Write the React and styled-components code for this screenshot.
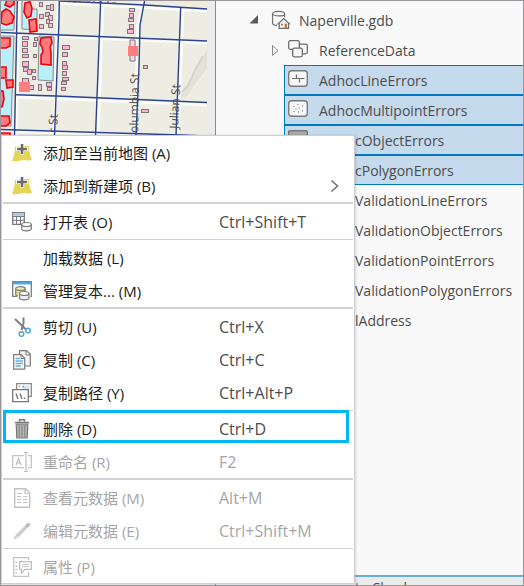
import React, { useState } from 'react';
import styled, { createGlobalStyle, css } from 'styled-components';

const GlobalStyle = createGlobalStyle`
  * {
    box-sizing: border-box;
  }
  body {
    margin: 0;
    font-family: 'Open Sans', 'Noto Sans CJK SC', sans-serif;
    font-size: 14px;
    color: #4c4c4c;
  }
  button {
    font: inherit;
    color: inherit;
    background: none;
    border: none;
    padding: 0;
  }
`;

const Window = styled.div`
  position: relative;
  display: flex;
  height: 100vh;
  border: 1px solid #98969c;
  background: #f9f9f9;
  overflow: hidden;
`;

const MapPane = styled.section`
  flex: 0 0 206px;
  background: #edede4;
  svg {
    display: block;
  }
`;

const Splitter = styled.div`
  flex: 0 0 8px;
  background: #ebebeb;
`;

const CatalogPane = styled.section`
  flex: 1;
  min-width: 0;
  display: flex;
  flex-direction: column;
  border-left: 1px solid #4a9fd0;
`;

const Tree = styled.ul`
  flex: 1;
  margin: 0;
  padding: 4px 0 0;
  list-style: none;
`;

const levels = {
  1: 32,
  2: 54,
  3: 68,
};

const TreeRow = styled.li`
  display: flex;
  align-items: center;
  height: 30px;
  margin-left: ${({ $level }) => levels[$level]}px;
  padding-left: ${({ $level }) => ($level === 3 ? 3 : 0)}px;
  border: 1px solid transparent;
  border-right: none;
  white-space: nowrap;
  ${({ $selected }) =>
    $selected &&
    css`
      background: #c5daed;
      border-color: #0079c1;
    `}
`;

const Expander = styled.button`
  display: flex;
  width: ${({ $wide }) => ($wide ? 22 : 17)}px;
`;

const NodeIcon = styled.span`
  display: flex;
  width: 20px;
  height: 22px;
  margin-right: ${({ $gap }) => $gap}px;
`;

// rows whose beginning lies under the context menu
const CoveredLabel = styled.span`
  margin-left: 36px;
`;

const DockedHeader = styled.footer`
  flex: 0 0 10px;
  border-top: 2px solid #6aaed6;
  background: #ebebeb;
  padding-left: 139px;
  line-height: 22px;
  overflow: hidden;
  white-space: nowrap;
`;

const Menu = styled.div`
  position: absolute;
  left: 0;
  top: 134px;
  width: 354px;
  border: 1px solid #cfced3;
  background: #fff;
  box-shadow: 1px 0 2px rgba(0, 0, 0, 0.15);
`;

const MenuItem = styled.button`
  position: relative;
  display: grid;
  grid-template-columns: 41px 176px 1fr 24px;
  align-items: center;
  width: 100%;
  height: 33px;
  text-align: left;
  color: #1c1c1c;
  white-space: nowrap;
  &:disabled {
    color: #a6a6a6;
  }
  ${({ $marked }) =>
    $marked &&
    css`
      &::after {
        content: '';
        position: absolute;
        inset: -2px 5px 2px 1px;
        border: 3px solid #00b9f2;
      }
    `}
`;

const ItemIcon = styled.span`
  display: flex;
  padding-left: 10px;
`;

const ItemName = styled.span`
  font-size: 15px;
`;

const Shortcut = styled.span`
  font-size: 16px;
  color: ${({ $disabled }) => ($disabled ? '#a6a6a6' : '#4c4c4c')};
`;

const Separator = styled.hr`
  height: ${({ $thin }) => ($thin ? 1 : 2)}px;
  margin: ${({ $thin }) => ($thin ? '1px 1px 1px 1px' : '0 1px 1px 1px')};
  border: none;
  background: #d2d1d6;
`;

const Svg = ({ children, size = 20 }) => (
  <svg width={size} height={size} viewBox={`0 0 ${size} ${size}`} fill="none" aria-hidden="true">
    {children}
  </svg>
);

const AddMapIcon = () => (
  <Svg>
    <path d="M3 3.500c5 .5 9 0 14-1 0 6 1 10 3 14-3 2-5 .5-8 .5s-7 2-12 1C2 13 3 8 3 3.500z" fill="#e6d45a" />
    <path d="M10 0v11.500M4 6h12" stroke="#fff" strokeWidth="4" />
    <path d="M10 1v10M5 6h10" stroke="#6b6b6b" strokeWidth="2.600" />
  </Svg>
);

const OpenTableIcon = () => (
  <Svg>
    <path d="M.7.7h11.600v11.600H.7z" fill="#fff" stroke="#7a7a7a" strokeWidth="1.3" />
    <path d="M1.300 1.300h10.400v2.500H1.300z" fill="#9fcbe4" />
    <path d="M1 4.500h11M1 8.300h11M4.500 4v8M8.500 4v8" stroke="#7a7a7a" />
    <path d="M9.700 13v4c0 2 9.600 2 9.600 0v-4" fill="#f1f1f1" stroke="#fff" strokeWidth="4" />
    <path d="M9.700 12.500v4.500c0 2.400 9.600 2.400 9.600 0v-4.500" fill="#f1f1f1" stroke="#7a7a7a" strokeWidth="1.200" />
    <ellipse cx="14.500" cy="12.500" rx="4.800" ry="2" fill="#fff" stroke="#7a7a7a" strokeWidth="1.200" />
  </Svg>
);

const ReplicaIcon = () => (
  <Svg>
    <path d="M5 15.300H.7V.7h18.600v14.600H18" fill="#fff" stroke="#7a7a7a" strokeWidth="1.300" />
    <path d="M1 .8h18v2.700H1z" fill="#52a8dc" />
    <path d="M3.700 7.500v6c0 2 9.500 2 9.500 0v-6" fill="#e9dc7a" stroke="#7a7a7a" strokeWidth="1.200" />
    <ellipse cx="8.400" cy="7.500" rx="4.700" ry="1.900" fill="#f6efb0" stroke="#7a7a7a" strokeWidth="1.200" />
    <path d="M7.500 12.500v4.500c0 2.400 9.500 2.400 9.500 0v-4.500" fill="#eee" stroke="#fff" strokeWidth="3" />
    <path d="M7.500 12.500v4.500c0 2.400 9.500 2.400 9.500 0v-4.500" fill="#eee" stroke="#7a7a7a" strokeWidth="1.200" />
    <ellipse cx="12.200" cy="12.500" rx="4.700" ry="2" fill="#fff" stroke="#7a7a7a" strokeWidth="1.200" />
  </Svg>
);

const CutIcon = () => (
  <Svg>
    <path d="M3 2l11 10.500" stroke="#808080" strokeWidth="2" />
    <path d="M11.500 .5v6L9.500 13" stroke="#808080" strokeWidth="2" />
    <circle cx="16" cy="13.500" r="2.300" stroke="#53a4d8" strokeWidth="1.500" />
    <circle cx="9.500" cy="17" r="2.300" stroke="#53a4d8" strokeWidth="1.500" />
  </Svg>
);

const CopyIcon = () => (
  <Svg>
    <path d="M7.500.7h7L18.300 4v12H7.500z" fill="#f4f4f4" stroke="#7a7a7a" strokeWidth="1.200" />
    <path d="M14 1v4h4" stroke="#7a7a7a" />
    <path d="M1.700 4.700h7.500l3.500 3.500v11h-11z" fill="#fff" stroke="#7a7a7a" strokeWidth="1.200" />
    <path d="M9 5v3.500h3.500" stroke="#7a7a7a" />
    <path d="M3.500 8.500H8M3.500 11H11M3.500 13.500H11M3.500 16H9" stroke="#62b0df" strokeWidth="1.300" />
  </Svg>
);

const CopyPathIcon = () => (
  <Svg>
    <path d="M4.700.7h14.600v12.600H4.700z" fill="#fff" stroke="#8a8a8a" strokeWidth="1.300" />
    <path d="M10 2.500h7.500v8H17V6h-7z" fill="#cfe6f2" />
    <path d="M7 3.500h1M11 3.500h1" stroke="#888" strokeWidth="1.500" />
    <path d="M.7 6.700h15.600v12H.7z" fill="#fff" stroke="#777" strokeWidth="1.300" />
    <path d="M4 10.500l2 5.500M8 10.500l2 5.500M12.500 14.500v1.500" stroke="#777" strokeWidth="1.400" />
  </Svg>
);

const DeleteIcon = () => (
  <Svg>
    <path d="M7.500 2.500V.8h5v1.700M3 3.500h14" stroke="#777" strokeWidth="1.400" />
    <path d="M4.200 5h11.600l-.6 14H4.800z" fill="#b4b4b4" stroke="#777" strokeWidth="1.200" />
    <path d="M7.200 6v12M10 6v12M12.800 6v12" stroke="#8a8a8a" strokeWidth="1.200" />
  </Svg>
);

const RenameIcon = () => (
  <Svg>
    <path d="M12 3.700H.7v12H12M16 3.700h3.300v12H16" stroke="#c4c4c4" strokeWidth="1.300" />
    <path d="M4 13l2.500-6.500L9 13M5 11h3" stroke="#bdbdbd" strokeWidth="1.200" />
    <path d="M14 1.500v17M12 .7h4M12 19.300h4" stroke="#c4c4c4" strokeWidth="1.300" />
  </Svg>
);

const ViewMetadataIcon = () => (
  <Svg>
    <path d="M2.700.7h11l4 4v14.600h-15z" stroke="#c4c4c4" strokeWidth="1.400" />
    <path d="M13 1v4.500h4.500M5 5.500h5M5 8.500h4M11 8.500h4.500M5 11.500h4M11 11.500h4.500M5 14.500h4M11 14.500h4.500" stroke="#c4c4c4" strokeWidth="1.200" />
  </Svg>
);

const EditMetadataIcon = () => (
  <Svg>
    <path d="M4.500 15.500L14 6" stroke="#cdcdcd" strokeWidth="3.500" />
    <path d="M15 5L16.500 3.500" stroke="#bbb" strokeWidth="3.500" strokeLinecap="round" />
    <path d="M3 14.500l2.500 2.500-4 1.800z" fill="#cdcdcd" />
  </Svg>
);

const PropertiesIcon = () => (
  <Svg>
    <path d="M16.500 3V.7H1.700v18.600h14.800V15" stroke="#c4c4c4" strokeWidth="1.300" />
    <path d="M3.500 5.500h2M3.500 9h2M3.500 12.500h2M3.500 16H5" stroke="#c4c4c4" strokeWidth="1.300" />
    <path d="M7.700 4.700h11.600v7.600h-6.500L9.500 16v-3.700H7.700z" fill="#fff" stroke="#bdbdbd" strokeWidth="1.300" />
    <path d="M10 7.300h7M10 9.700h7" stroke="#bdbdbd" />
  </Svg>
);

const GeodatabaseIcon = () => (
  <Svg size={22}>
    <path d="M1.700 4v10.500c0 1.500 2.500 2.300 5 2.500M15 4v4" stroke="#6e6e6e" strokeWidth="1.300" />
    <ellipse cx="8.400" cy="4" rx="6.700" ry="2.500" stroke="#6e6e6e" strokeWidth="1.300" />
    <path d="M8 15l6-5.500 6 5.500h-.7v5.300H9V15z" fill="#f4f4f4" stroke="#6e6e6e" strokeWidth="1.400" />
    <path d="M11 15h2v2h-2z" fill="#777" />
    <path d="M15 15h2.500v5H15z" fill="#b5793b" />
  </Svg>
);

const DatasetIcon = () => (
  <Svg>
    <rect x="8.700" y="5.200" width="10.600" height="9.600" rx="1.500" fill="#f9f9f9" stroke="#6e6e6e" strokeWidth="1.300" />
    <rect x=".7" y="1.700" width="10.600" height="8.600" rx="1.500" fill="#f9f9f9" stroke="#6e6e6e" strokeWidth="1.300" />
    <rect x="4.700" y="9.200" width="9.600" height="8.600" rx="1.500" fill="#f9f9f9" stroke="#6e6e6e" strokeWidth="1.300" />
  </Svg>
);

const LineClassIcon = () => (
  <Svg>
    <rect x=".7" y="1.700" width="18.600" height="15.600" rx="3" fill="#f7f7f7" stroke="#7a7a7a" strokeWidth="1.400" />
    <path d="M4 9.500h12.500M8.500 5.500v4M11.500 9.500v4" stroke="#6e6e6e" strokeWidth="1.200" />
  </Svg>
);

const PointClassIcon = () => (
  <Svg>
    <rect x=".7" y="1.700" width="18.600" height="15.600" rx="3" fill="#f7f7f7" stroke="#7a7a7a" strokeWidth="1.400" />
    <path
      d="M5.500 7.500h1M9.500 5.500h1M14 7h1M7.500 10h1M11 9h1M5.500 12.500h1M10 13h1M14 12h1"
      stroke="#6e6e6e"
      strokeWidth="1.200"
    />
  </Svg>
);

const TableClassIcon = () => (
  <Svg>
    <rect x=".7" y="1.700" width="18.600" height="15.600" rx="1" fill="#aaa" stroke="#7a7a7a" strokeWidth="1.400" />
  </Svg>
);

// building footprints as [x, y, width, height]
const houses = [
  [39, 2, 4, 5], [46, 5, 5, 5], [50, 4, 4, 7], [39, 14, 5, 5], [45, 12, 5, 5], [48, 15, 5, 6],
  [39, 24, 5, 5], [46, 19, 4, 5], [48, 23, 5, 5],
  [22, 36, 7, 4], [22, 41, 6, 6], [22, 48, 6, 5], [22, 54, 7, 4], [22, 61, 7, 6], [23, 67, 6, 5],
  [27, 69, 5, 6], [22, 78, 7, 5], [34, 37, 4, 4], [33, 42, 4, 5], [33, 54, 4, 4], [32, 69, 4, 4],
  [32, 76, 4, 4], [29, 85, 5, 5], [38, 84, 4, 7], [46, 82, 6, 5], [47, 87, 5, 4],
  [62, 45, 8, 5], [62, 52, 6, 5], [62, 61, 5, 5], [62, 65, 6, 5], [62, 71, 5, 5], [62, 77, 7, 4],
  [61, 81, 6, 4], [61, 87, 5, 4],
  [129, 8, 6, 4], [129, 13, 5, 5], [128, 18, 6, 4], [129, 24, 5, 5], [127, 29, 7, 5],
  [143, 65, 5, 4], [141, 109, 8, 4],
];

const MapView = () => (
  <svg width="206" height="134" viewBox="1 1 206 134" role="img" aria-label="map">
    <rect width="210" height="136" fill="#edede4" />
    <path d="M145 0h62v4l-62-3z" fill="#f1edc8" />
    <path d="M207 50l-10 18-14 22-3 6 6 2 12-18 9-12z" fill="#e3e2d9" />
    <path d="M203 56l-8 14-7 16-6 6" stroke="#d6d4c9" strokeWidth="2" fill="none" />
    <g stroke="#fbfbf7" strokeWidth="3" fill="none">
      <path d="M19 0l-3 136M58 0v20l-4 116M103 0l-5 136M143 0l-5 26-3 110M183 7l-5 129" />
      <path d="M60 3l147 8M0 34l207 9M16 97l191 8M0 131l207 7" />
    </g>
    <g fill="#b9effb" stroke="#868b8e" strokeWidth="1">
      <path d="M0 0h15l-1 30H0zM0 36h14l-3 90H0z" />
      <path d="M22 0h7v9h8v21l-15-1zM39 36l15 1-1 44-15-1z" />
    </g>
    <g fill="#fbb4cf" stroke="#7e757d" strokeWidth="1">
      {houses.map(([x, y, w, h]) => (
        <rect key={`${x}-${y}`} x={x + 0.5} y={y + 0.5} width={w - 1} height={h - 1} />
      ))}
      <path d="M130 40h5v21h-5z" fill="#fad4ea" />
    </g>
    <g fill="#ff7b7b" stroke="#f0000f" strokeWidth="1.600">
      <path d="M7 0h7v4l-4 3-5-2zM2 12l4-3 4 2 4 6-2 6-6 2-5-2zM0 38h10v8l-4 2H0z" />
      <path d="M0 67h6v11H0zM6 80h7v7l-6 1zM0 91h3l1 8-2 8H0zM0 116h9l1 7-4 3H0zM0 133h10v4H0z" />
      <path d="M25 3l5-1 2 6-1 8-4 2-3-6zM29 20l7-1 1 12-7 1z" />
      <path d="M41 38l10-1 1 6-2 4 1 5v13l-10-1v-9l2-3-1-5-2-3z" />
    </g>
    <g stroke="#2a4296" strokeWidth="1.400" fill="none">
      <path d="M17.300 0L14.500 136M59.300 0L59 20 54.500 136M100.700 0L95.500 136" />
      <path d="M144.700 0L140 25 139 67 136 136M180.700 7L176 136" />
      <path d="M60 1l85 4 62 4M0 32.500l207 8.500M16 94.700l40 1.300 151 6.500M0 129.500l180 5.500 27 1" />
    </g>
    <path d="M66 1l3 1M73 2h3M79 1l2 2M87 2h3M93 2h2M99 2h3M107 2h2M112 3h4" stroke="#555" />
    <g fill="#4f4f4f" fontFamily="Open Sans, sans-serif" fontSize="12">
      <text transform="translate(138 133) rotate(-89)">olumbia St</text>
      <text transform="translate(178 129) rotate(-87)">Julian St</text>
      <text transform="translate(57 133) rotate(-88)">r St</text>
    </g>
    <path d="M128 46h10v10h-10zM19 82h11v10H19z" fill="#ff7f7f" />
  </svg>
);

const tree = [
  { name: 'AdhocLineErrors', icon: <LineClassIcon /> },
  { name: 'AdhocMultipointErrors', icon: <PointClassIcon /> },
  { name: 'cObjectErrors', icon: <TableClassIcon />, covered: true },
  { name: 'cPolygonErrors', covered: true },
  { name: 'ValidationLineErrors', covered: true },
  { name: 'ValidationObjectErrors', covered: true },
  { name: 'ValidationPointErrors', covered: true },
  { name: 'ValidationPolygonErrors', covered: true },
  { name: 'lAddress', covered: true },
];

const selectedNames = ['AdhocLineErrors', 'AdhocMultipointErrors', 'cObjectErrors', 'cPolygonErrors'];

const menuGroups = [
  [
    { name: '添加至当前地图', accessKey: 'A', icon: <AddMapIcon /> },
    { name: '添加到新建项', accessKey: 'B', icon: <AddMapIcon />, submenu: true },
  ],
  [{ name: '打开表', accessKey: 'O', icon: <OpenTableIcon />, shortcut: 'Ctrl+Shift+T' }],
  [
    { name: '加载数据', accessKey: 'L' },
    { name: '管理复本...', accessKey: 'M', icon: <ReplicaIcon /> },
  ],
  [
    { name: '剪切', accessKey: 'U', icon: <CutIcon />, shortcut: 'Ctrl+X' },
    { name: '复制', accessKey: 'C', icon: <CopyIcon />, shortcut: 'Ctrl+C' },
    { name: '复制路径', accessKey: 'Y', icon: <CopyPathIcon />, shortcut: 'Ctrl+Alt+P' },
  ],
  [
    { name: '删除', accessKey: 'D', icon: <DeleteIcon />, shortcut: 'Ctrl+D', marked: true },
    { name: '重命名', accessKey: 'R', icon: <RenameIcon />, shortcut: 'F2', disabled: true },
  ],
  [
    { name: '查看元数据', accessKey: 'M', icon: <ViewMetadataIcon />, shortcut: 'Alt+M', disabled: true },
    { name: '编辑元数据', accessKey: 'E', icon: <EditMetadataIcon />, shortcut: 'Ctrl+Shift+M', disabled: true },
  ],
  [{ name: '属性', accessKey: 'P', icon: <PropertiesIcon />, disabled: true }],
];

const ContextMenu = () => (
  <Menu role="menu">
    {menuGroups.map((group, index) => (
      <React.Fragment key={group[0].name}>
        {index > 0 && <Separator $thin={index % 2 === 0} />}
        {group.map((item) => (
          <MenuItem key={item.name} type="button" role="menuitem" disabled={item.disabled} $marked={item.marked}>
            <ItemIcon>{item.icon}</ItemIcon>
            <ItemName>
              {item.name} ({item.accessKey})
            </ItemName>
            <Shortcut $disabled={item.disabled}>{item.shortcut}</Shortcut>
            {item.submenu && (
              <svg width="10" height="14" viewBox="0 0 10 14" fill="none" aria-hidden="true">
                <path d="M1.500 1.500L7.500 7l-6 5.500" stroke="#6e6e6e" strokeWidth="1.500" />
              </svg>
            )}
          </MenuItem>
        ))}
      </React.Fragment>
    ))}
  </Menu>
);

const App = () => {
  const [selected, setSelected] = useState(selectedNames);

  return (
    <>
      <GlobalStyle />
      <Window>
        <MapPane>
          <MapView />
        </MapPane>
        <Splitter />
        <CatalogPane>
          <Tree role="tree" aria-label="Catalog">
            <TreeRow role="treeitem" $level={1}>
              <Expander type="button" $wide aria-label="Collapse">
                <svg width="10" height="10" viewBox="0 0 10 10" aria-hidden="true">
                  <path d="M9 0v8.500H.5z" fill="#5a5a5a" />
                </svg>
              </Expander>
              <NodeIcon $gap={8}>
                <GeodatabaseIcon />
              </NodeIcon>
              Naperville.gdb
            </TreeRow>
            <TreeRow role="treeitem" $level={2}>
              <Expander type="button" aria-label="Expand">
                <svg width="9" height="13" viewBox="0 0 9 13" fill="none" aria-hidden="true">
                  <path d="M1.500 1.500L7 6.500l-5.500 5z" stroke="#8a8a8a" />
                </svg>
              </Expander>
              <NodeIcon $gap={11}>
                <DatasetIcon />
              </NodeIcon>
              ReferenceData
            </TreeRow>
            {tree.map((node) => (
              <TreeRow
                key={node.name}
                role="treeitem"
                $level={3}
                $selected={selected.includes(node.name)}
                onClick={() => setSelected([node.name])}
              >
                <NodeIcon $gap={11}>{node.icon}</NodeIcon>
                {node.covered ? <CoveredLabel>{node.name}</CoveredLabel> : node.name}
              </TreeRow>
            ))}
          </Tree>
          <DockedHeader>te Check</DockedHeader>
        </CatalogPane>
        <ContextMenu />
      </Window>
    </>
  );
};

export default App;
